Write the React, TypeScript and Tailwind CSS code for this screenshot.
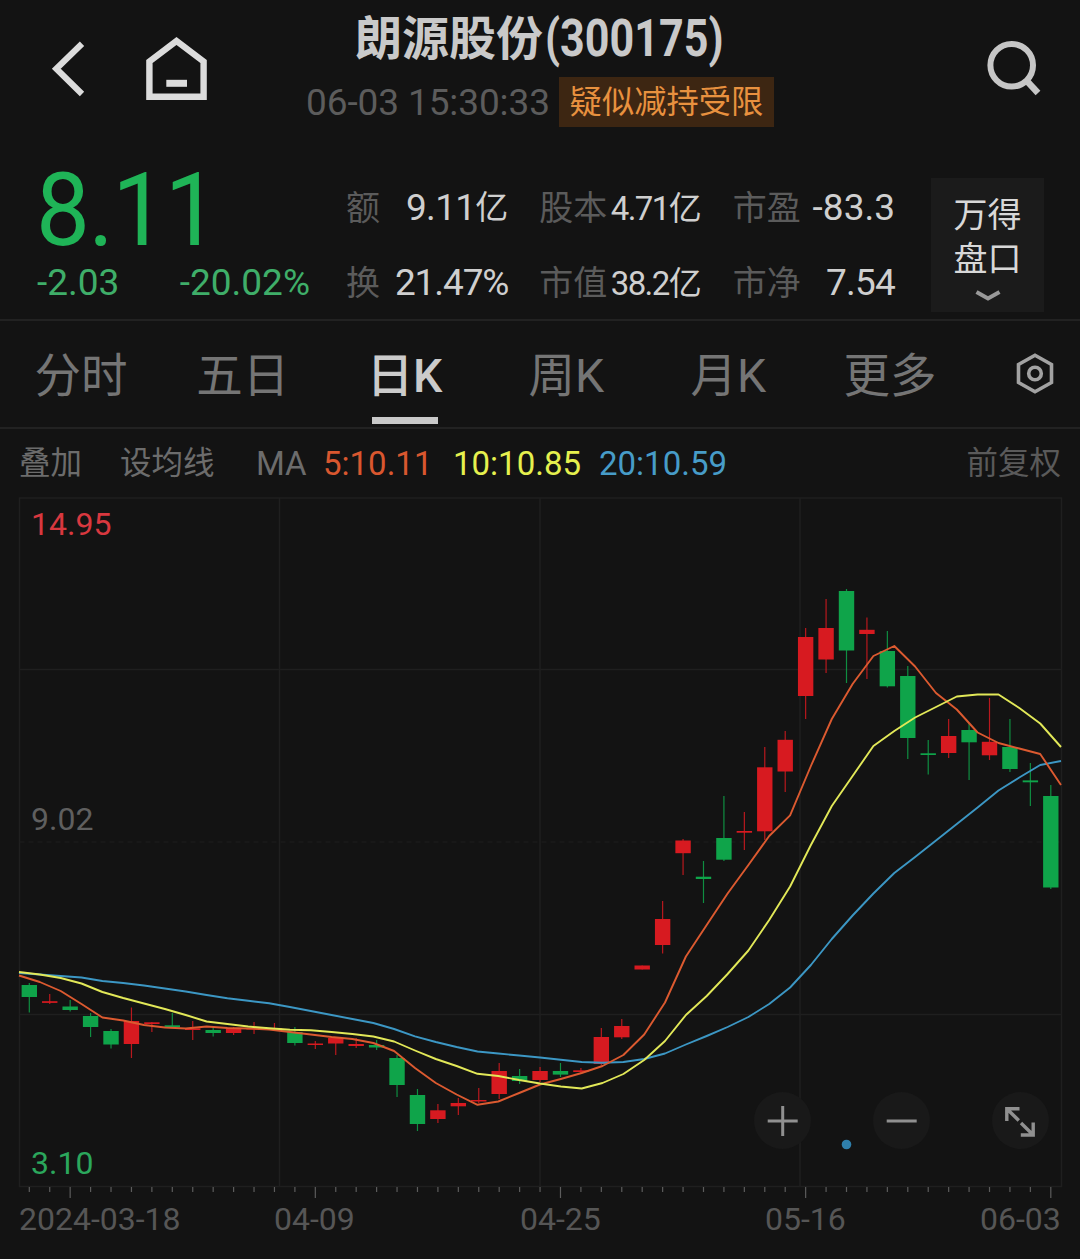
import React from 'react';

type Candle = {
  up: boolean;
  high: number;
  top: number;
  bottom: number;
  low: number;
};

const CHART_TOP = 490;
const CANDLE_START = 29.3;
const CANDLE_STEP = 20.43;
const CANDLE_WIDTH = 15.4;
const LINE_START = 19;
const LINE_STEP = 20.84;

const RED = '#d71a20';
const GREEN = '#0fa44a';

// [direction, high, body top, body bottom, low]
const RAW: [string, number, number, number, number][] = [
  ['d', 983, 985, 997, 1012.5],
  ['u', 994, 1001.2, 1002.9, 1004],
  ['d', 1000, 1006.5, 1010, 1011.5],
  ['d', 1013, 1016, 1027, 1037],
  ['d', 1029, 1031, 1044.5, 1048.5],
  ['u', 1007.5, 1021, 1044, 1058],
  ['u', 1022, 1022.3, 1024, 1032],
  ['d', 1013, 1025.3, 1027.3, 1028],
  ['u', 1021, 1028.3, 1030, 1040],
  ['d', 1028, 1030, 1033, 1036.5],
  ['u', 1027, 1028.5, 1033, 1035],
  ['u', 1022, 1028, 1029.5, 1034],
  ['u', 1023, 1028, 1029.5, 1031],
  ['d', 1027, 1032, 1043, 1045.5],
  ['u', 1041, 1043.5, 1045, 1049],
  ['u', 1037, 1038, 1043.5, 1055],
  ['u', 1038, 1044, 1046, 1048],
  ['d', 1040, 1045, 1047.5, 1050],
  ['d', 1055, 1058, 1085, 1097],
  ['d', 1089, 1095, 1124, 1131],
  ['u', 1104, 1110.3, 1119, 1123],
  ['u', 1098, 1103, 1106.3, 1115],
  ['u', 1088, 1100, 1101.5, 1103],
  ['u', 1063, 1071, 1094, 1099],
  ['d', 1069, 1076, 1081, 1084],
  ['u', 1067, 1071, 1080, 1082],
  ['d', 1063, 1071, 1074.6, 1077],
  ['u', 1068, 1070.3, 1072, 1074],
  ['u', 1028, 1037, 1064, 1065],
  ['u', 1019, 1026, 1037.3, 1039],
  ['u', 965.5, 965.5, 969.5, 969.5],
  ['u', 901, 919, 945, 953.5],
  ['u', 839, 840.5, 853.2, 875],
  ['d', 861, 876.7, 879, 903],
  ['d', 796, 838, 859.7, 861],
  ['u', 812, 831, 832.7, 850],
  ['u', 747, 767.3, 831.3, 840],
  ['u', 731, 739.8, 771.5, 792],
  ['u', 628, 637, 696, 719],
  ['u', 599, 628, 659.5, 673],
  ['d', 589, 591, 650.5, 683],
  ['u', 617.5, 629.8, 634, 679],
  ['d', 631, 651, 686.3, 687.5],
  ['d', 666, 676, 738, 759],
  ['d', 740, 753.3, 755, 774.5],
  ['u', 719, 736, 753, 758],
  ['d', 723, 730, 742.3, 780],
  ['u', 698, 741.8, 755.3, 760],
  ['d', 719, 747, 769, 772],
  ['d', 763, 780.4, 782.3, 806],
  ['d', 785, 796, 887.5, 889],
];

const CANDLES: Candle[] = RAW.map(([dir, high, top, bottom, low]) => ({
  up: dir === 'u',
  high,
  top,
  bottom,
  low,
}));

const MA5 = [
  975.5, 982, 991, 1004, 1017.5, 1020.5, 1025, 1027.5, 1028.5, 1026.5, 1028, 1028.5, 1029.5, 1032, 1034.5, 1037, 1039,
  1043, 1051, 1068, 1083, 1094.5, 1104.8, 1101.5, 1093, 1084.5, 1079, 1073, 1066, 1055, 1034.5, 1002.5, 956.5, 925,
  893.5, 865, 836, 815.3, 766, 719, 684, 656, 646, 666.5, 693, 709.5, 732.5, 743, 748.5, 754, 785,
];

const MA10 = [
  972, 974.5, 978, 983.5, 992, 998, 1003.5, 1009, 1015, 1021.5, 1024, 1026.5, 1028.3, 1029.8, 1030.2, 1032, 1034,
  1036.5, 1041.5, 1050.5, 1059, 1066, 1073.8, 1076, 1080, 1083.5, 1086.5, 1088.5, 1083, 1074, 1060, 1041, 1015, 996,
  974, 950.5, 920, 886.5, 845, 806, 776, 746, 731, 717.5, 707, 696.5, 694.5, 694.5, 708, 723.5, 747,
];

const MA20 = [
  973, 974.5, 976, 977.5, 981, 983, 985.5, 988.5, 991.5, 995, 998.3, 1000.8, 1003.2, 1007, 1011, 1015, 1019, 1023,
  1029, 1036.3, 1042, 1047, 1051.5, 1053.5, 1055.5, 1057.5, 1059.7, 1062, 1062.8, 1062, 1059, 1053.5, 1044.5, 1036,
  1027, 1017, 1004, 987.5, 965, 939, 915.5, 893.5, 873, 857, 840.5, 824, 807.5, 790.5, 777.5, 765, 761,
];

const toPoints = (values: number[]) =>
  values.map((y, i) => `${(LINE_START + i * LINE_STEP).toFixed(1)},${y}`).join(' ');

const TABS = ['分时', '五日', '日K', '周K', '月K', '更多'];

const STATS = [
  { label: '额', value: '9.11', unit: '亿', size: 'text-[37px] tracking-[-0.7px]' },
  { label: '股本', value: '4.71', unit: '亿', size: 'text-[33px] tracking-[-1.6px] pt-0.5' },
  { label: '市盈', value: '-83.3', unit: '', size: 'text-[37px]' },
  { label: '换', value: '21.47%', unit: '', size: 'text-[37px] tracking-[-1.1px]' },
  { label: '市值', value: '38.2', unit: '亿', size: 'text-[33px] tracking-[-1.6px] pt-0.5' },
  { label: '市净', value: '7.54', unit: '', size: 'text-[37px] tracking-[-0.8px]' },
];

const Header = () => (
  <header className="flex h-[160px] justify-between">
    <div className="flex w-[300px] pt-[34px] pl-[46px]">
      <svg width="46" height="70" viewBox="46 34 46 70" fill="none" stroke="#dcdcdc" strokeWidth="6.2">
        <path d="M82 43.7 56.3 68.8 82 94" />
      </svg>
      <svg className="ml-[50px]" width="70" height="70" viewBox="142 34 70 70" fill="none" stroke="#dcdcdc">
        <path d="M149.4 96.8V61.5L176.5 41 203.6 61.5V96.8Z" strokeWidth="6.4" />
        <path d="M166.3 83.3H187" strokeWidth="7" />
      </svg>
    </div>

    <div className="flex w-[480px] flex-col items-center whitespace-nowrap">
      <h1 className="mt-[9px] flex h-[58px] w-[370px] items-center text-[47px] leading-none font-bold text-[#c9c9c9]">
        <span>朗源股份</span>
        <span className="ml-[2px] origin-left scale-x-[0.845] text-[51px]">(300175)</span>
      </h1>
      <div className="mt-[10px] flex h-[50px] w-[468px] items-center justify-between">
        <span className="text-[37px] leading-none tracking-[-0.1px] text-[#5c5c5c]">06-03 15:30:33</span>
        <span className="flex h-[50px] w-[215px] items-center justify-center bg-[#3d2612] text-[32.3px] leading-none text-[#e8913f]">
          疑似减持受限
        </span>
      </div>
    </div>

    <div className="flex w-[300px] justify-end pt-[34px] pr-[32px]">
      <svg width="66" height="70" viewBox="982 34 66 70" fill="none" stroke="#c6c6c6" strokeWidth="6">
        <circle cx="1011.7" cy="65.3" r="21.3" />
        <path d="M1025.5 79.5 1038 93" strokeWidth="6.5" />
      </svg>
    </div>
  </header>
);

const Quote = () => (
  <section className="flex h-[161px] border-b-2 border-[#222222] whitespace-nowrap">
    <div className="w-[346px] pl-[37px] text-[#1fb457]">
      <div className="mt-[8px] -ml-[1px] h-[84px] origin-left scale-x-[0.94] text-[102px] leading-[84px] tracking-[-1.5px]">
        8.11
      </div>
      <div className="mt-[13px] flex w-[273px] justify-between text-[37px] leading-9 text-[#3fae69]">
        <span>-2.03</span>
        <span>-20.02%</span>
      </div>
    </div>

    <div className="grid h-[150px] w-[549px] grid-cols-3 gap-x-[31px] pt-[10px]">
      {STATS.map((stat) => (
        <div key={stat.label} className="flex h-[75px] items-center justify-between">
          <span className="text-[34px] leading-none text-[#5b5b5b]">{stat.label}</span>
          <span className={`flex items-center leading-none text-[#cfcfcf] ${stat.size}`}>
            {stat.value}
            {stat.unit && <span className="text-[33px] tracking-normal">{stat.unit}</span>}
          </span>
        </div>
      ))}
    </div>

    <button className="mt-[18px] ml-[36px] flex h-[134px] w-[113px] flex-col items-center bg-[#1b1b1b] pt-[15px] text-[34px] leading-[44px] text-[#d8d8d8]">
      <span>万得</span>
      <span>盘口</span>
      <svg className="mt-[8px]" width="28" height="14" viewBox="0 0 28 14" fill="none" stroke="#999999" strokeWidth="4">
        <path d="M2.5 3 14 9.5 25.5 3" />
      </svg>
    </button>
  </section>
);

const Tabs = () => (
  <nav className="flex h-[108px] items-start border-b-2 border-[#222222]">
    <div className="grid h-full w-[971px] grid-cols-6">
      {TABS.map((tab) => {
        const active = tab === '日K';
        return (
          <div
            key={tab}
            className={`flex flex-col items-center pt-[23px] text-[46.5px] leading-[64px] ${active ? 'font-medium text-[#cbcbcb]' : 'text-[#757575]'}`}
          >
            <span>{tab}</span>
            {active && <span className="mt-[9px] h-[7px] w-[66px] bg-[#c9c9c9]" />}
          </div>
        );
      })}
    </div>
    <svg className="mt-[28px] ml-[40px]" width="48" height="48" viewBox="1011 349 48 48" fill="none" stroke="#a2a2a2" strokeWidth="3.6">
      <path d="M1035 355.3 1051.5 364.5V382.5L1035 391.7 1018.5 382.5V364.5Z" />
      <circle cx="1035" cy="373.5" r="6.3" />
    </svg>
  </nav>
);

const Indicators = () => (
  <div className="flex h-[69px] items-center px-[19px] text-[31.5px] leading-none whitespace-nowrap text-[#6c6c6c]">
    <span className="w-[101px]">叠加</span>
    <span className="w-[136px]">设均线</span>
    <span className="w-[67px] text-[33px]">MA</span>
    <span className="w-[130px] text-[33px] text-[#d9572f]">5:10.11</span>
    <span className="w-[146px] text-[33px] text-[#e5f04e]">10:10.85</span>
    <span className="text-[33px] text-[#479cc8]">20:10.59</span>
    <span className="ml-auto text-[#5a5a5a]">前复权</span>
  </div>
);

const CandleChart = () => (
  <svg className="block" width="1080" height="710" viewBox={`0 ${CHART_TOP} 1080 710`}>
    {/* Grid */}
    <g stroke="#1f1f1f" strokeWidth="1.5" fill="none">
      <path d="M19.5 498H1061.5V1186.5H19.5Z" />
      <path d="M19.5 669.5H1061.5M19.5 1014.5H1061.5" />
      <path d="M279.5 498V1186.5M540 498V1186.5M800 498V1186.5" />
      <path d="M19.5 842H1061.5" strokeDasharray="5 4" strokeWidth="1" />
    </g>

    {/* Candles */}
    {CANDLES.map((candle, i) => {
      const x = CANDLE_START + i * CANDLE_STEP;
      const color = candle.up ? RED : GREEN;
      return (
        <g key={i}>
          <line x1={x} x2={x} y1={candle.high} y2={candle.low} stroke={color} strokeWidth="1.2" opacity="0.85" />
          <rect x={x - CANDLE_WIDTH / 2} y={candle.top} width={CANDLE_WIDTH} height={candle.bottom - candle.top} fill={color} />
        </g>
      );
    })}

    {/* Moving averages */}
    <g fill="none" strokeWidth="1.9" strokeLinejoin="round">
      <polyline points={toPoints(MA20)} stroke="#3c97c4" />
      <polyline points={toPoints(MA5)} stroke="#dc5a30" />
      <polyline points={toPoints(MA10)} stroke="#e2e858" />
    </g>

    {/* Day ticks */}
    <g stroke="#5c5c5c" strokeWidth="1.2">
      {CANDLES.map((_, i) => {
        const x = CANDLE_START + i * CANDLE_STEP;
        return <line key={i} x1={x} x2={x} y1={1187} y2={i % 12 === 2 ? 1198 : 1192} />;
      })}
    </g>
    <circle cx="846.5" cy="1144.5" r="4.8" fill="#2f7fab" />
  </svg>
);

const ZoomButtons = () => (
  <div className="absolute top-[602px] left-[754px] flex gap-[62px]">
    {['M13 29H43M28 14V44', 'M13 29H43'].map((d) => (
      <button key={d} className="size-[57px] rounded-full bg-[#191919]">
        <svg width="57" height="57" viewBox="-0.7 0 57 57" fill="none" stroke="#909090" strokeWidth="3">
          <path d={d} />
        </svg>
      </button>
    ))}
    <button className="size-[57px] rounded-full bg-[#191919]">
      <svg width="57" height="57" viewBox="992 1092 57 57" fill="none" stroke="#909090" strokeWidth="3.4">
        <path d="M1019.5 1108.7H1006.8V1121M1006.8 1108.7 1018.8 1120.5" />
        <path d="M1020.8 1135H1033.2V1122.5M1033.2 1135 1021 1123" />
      </svg>
    </button>
  </div>
);

export default function App() {
  return (
    <main className="h-[1259px] w-[1080px] overflow-hidden bg-[#131313] font-[Roboto,'Noto_Sans_CJK_SC',sans-serif]">
      <Header />
      <Quote />
      <Tabs />
      <Indicators />

      <section className="relative -mt-2 text-[32px] leading-none">
        <CandleChart />
        <span className="absolute top-[18px] left-[31px] text-[#d8383f]">14.95</span>
        <span className="absolute top-[313px] left-[31px] text-[#5f5f5f]">9.02</span>
        <span className="absolute top-[657px] left-[31px] text-[#2ba75c]">3.10</span>
        <ZoomButtons />
      </section>

      <div className="flex pt-[3px] pl-[19px] text-[32px] leading-none text-[#565656]">
        <span className="w-[255px]">2024-03-18</span>
        <span className="w-[246px]">04-09</span>
        <span className="w-[245px]">04-25</span>
        <span className="w-[215px]">05-16</span>
        <span>06-03</span>
      </div>
    </main>
  );
}
